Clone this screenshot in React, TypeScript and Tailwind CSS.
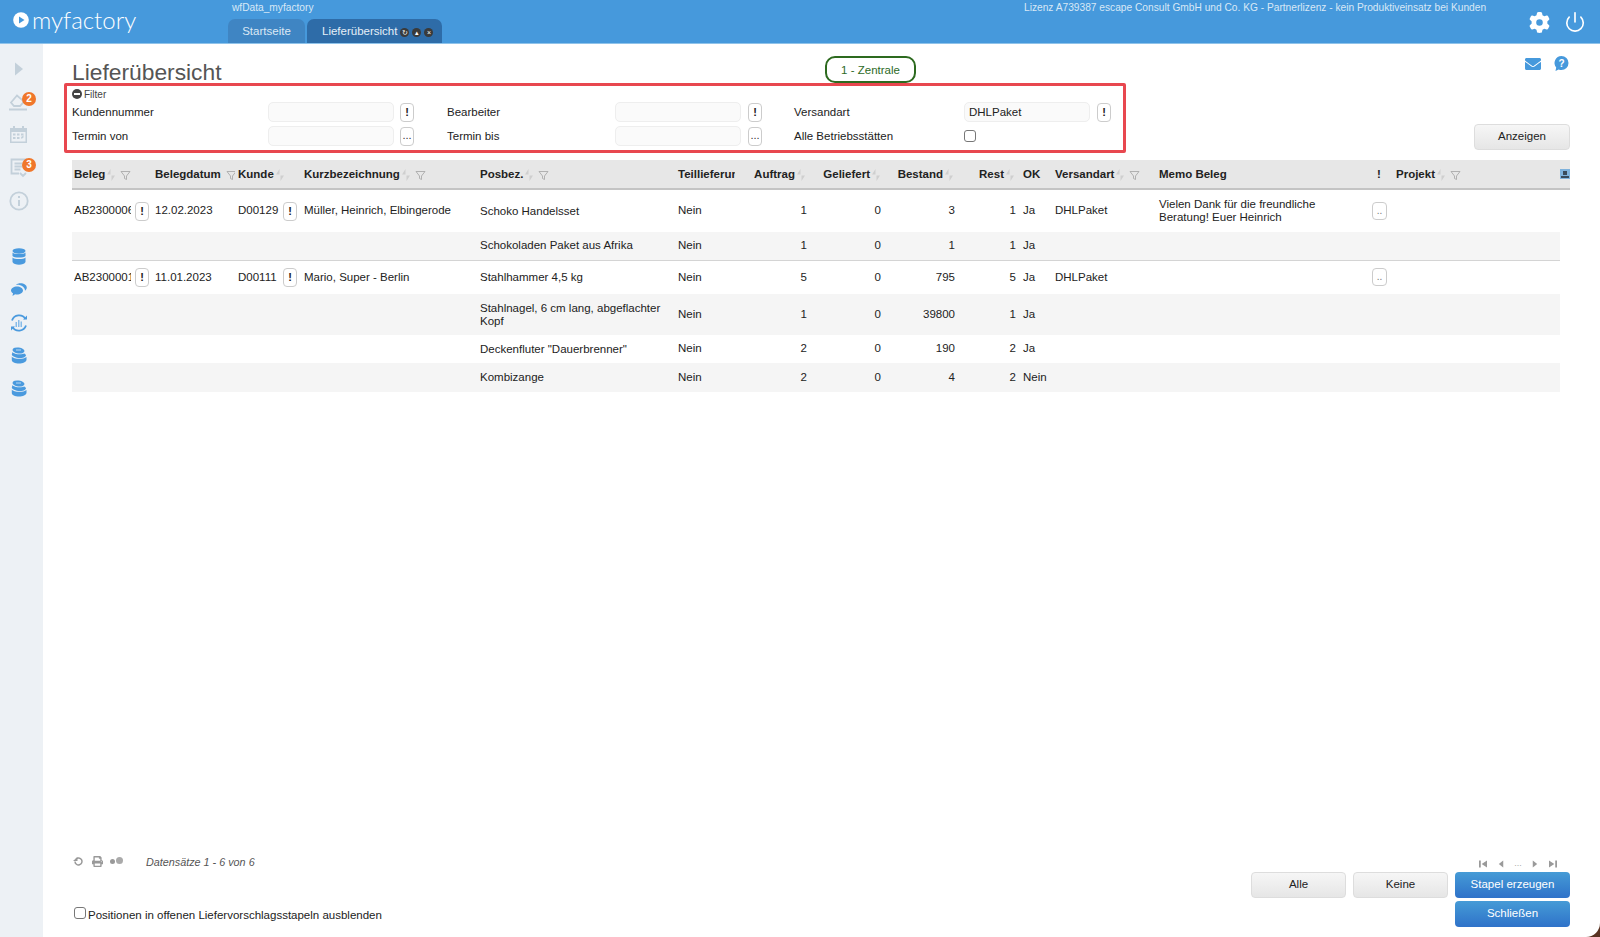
import { Power } from 'lucide-react';
import { FaEnvelope, FaPrint } from 'react-icons/fa';
import { FaGear } from 'react-icons/fa6';

type Row = {
  beleg?: string; datum?: string; kunde?: string; kurz?: string; pos: string;
  auftrag: number; bestand: number; ok: string; versand?: string; memo?: string;
  h: string; gray?: boolean; line?: boolean;
};

const rows: Row[] = [
  { beleg: 'AB2300006', datum: '12.02.2023', kunde: 'D00129', kurz: 'Müller, Heinrich, Elbingerode', pos: 'Schoko Handelsset', auftrag: 1, bestand: 3, ok: 'Ja', versand: 'DHLPaket', memo: 'Vielen Dank für die freundliche Beratung! Euer Heinrich', h: 'h-[43px]' },
  { pos: 'Schokoladen Paket aus Afrika', auftrag: 1, bestand: 1, ok: 'Ja', h: 'h-[28px]', gray: true, line: true },
  { beleg: 'AB2300001', datum: '11.01.2023', kunde: 'D00111', kurz: 'Mario, Super - Berlin', pos: 'Stahlhammer 4,5 kg', auftrag: 5, bestand: 795, ok: 'Ja', versand: 'DHLPaket', h: 'h-[34px]' },
  { pos: 'Stahlnagel, 6 cm lang, abgeflachter Kopf', auftrag: 1, bestand: 39800, ok: 'Ja', h: 'h-[41px]', gray: true },
  { pos: 'Deckenfluter "Dauerbrenner"', auftrag: 2, bestand: 190, ok: 'Ja', h: 'h-[28px]' },
  { pos: 'Kombizange', auftrag: 2, bestand: 4, ok: 'Nein', h: 'h-[29px]', gray: true },
];

function Sort() {
  return (
    <svg width="8" height="12" viewBox="0 0 8 12" className="shrink-0 ml-[2px]">
      <path d="M3.500 0 0 5.500h3.500zM4.500 12 8 6.500H4.500z" fill="#cfcfcf" />
    </svg>
  );
}

function Funnel() {
  return (
    <svg width="11" height="11" viewBox="0 0 11 11" className="shrink-0 ml-[5px]">
      <path d="M1 1.500h9L6.500 6v3.500L4.500 8.500V6z" fill="none" stroke="#aaa" strokeWidth="0.9" />
    </svg>
  );
}

function SmallBtn({ label = '!' }: { label?: string }) {
  return (
    <button type="button" className="w-[14px] h-[19px] shrink-0 flex items-center justify-center rounded-[4px] border border-[#ccc] bg-white text-[11px] font-bold leading-none text-[#222]">
      {label}
    </button>
  );
}

function DotsBtn() {
  return (
    <button type="button" className="w-[14px] h-[19px] shrink-0 flex items-end justify-center pb-[4px] rounded-[4px] border border-[#ccc] bg-white text-[11px] leading-none text-[#333]">
      ...
    </button>
  );
}

function Head({ label, sort, filter, right, className = '' }: { label: string; sort?: boolean; filter?: boolean; right?: boolean; className?: string }) {
  return (
    <th className={`p-0 pt-[2px] font-bold text-[11.500px] text-[#222] ${className}`}>
      <div className={`flex items-center overflow-hidden whitespace-nowrap ${right ? 'justify-end pr-[5px]' : 'pl-[2px]'}`}>
        {label}
        {sort && <Sort />}
        {filter && <Funnel />}
      </div>
    </th>
  );
}

function TableRow({ row }: { row: Row }) {
  const bg = row.gray ? 'bg-[#f5f5f5]' : 'bg-white';
  const line = row.line ? 'border-b border-[#d4d4d4]' : '';
  const td = `p-0 align-middle ${bg} ${line}`;
  return (
    <tr className={row.h}>
      <td className={td}>
        {row.beleg && (
          <div className="flex items-center pl-[2px]">
            <span className="w-[57px] mr-[4px] overflow-hidden whitespace-nowrap">{row.beleg}</span>
            <SmallBtn />
          </div>
        )}
      </td>
      <td className={`${td} pl-[3px]`}>{row.datum}</td>
      <td className={td}>
        {row.kunde && (
          <div className="flex items-center pl-[3px]">
            <span className="w-[45px]">{row.kunde}</span>
            <SmallBtn />
          </div>
        )}
      </td>
      <td className={`${td} pl-[3px]`}>{row.kurz}</td>
      <td className={`${td} pl-[3px] pr-[8px] leading-[13px]`}>{row.pos}</td>
      <td className={`${td} pl-[3px]`}>Nein</td>
      <td className={`${td} text-right pr-[3px]`}>{row.auftrag}</td>
      <td className={`${td} text-right pr-[4px]`}>0</td>
      <td className={`${td} text-right pr-[3px]`}>{row.bestand}</td>
      <td className={`${td} text-right pr-[3px]`}>{row.auftrag}</td>
      <td className={`${td} pl-[4px]`}>{row.ok}</td>
      <td className={`${td} pl-[3px]`}>{row.versand}</td>
      <td className={`${td} pl-[3px] pr-[16px] leading-[13px]`}>{row.memo}</td>
      <td className={td}>
        {row.versand && (
          <button type="button" className="ml-[5px] w-[15px] h-[18px] flex items-end justify-center pb-[3px] rounded-[4px] border border-[#ccc] bg-white text-[10px] leading-none text-[#777]">
            ..
          </button>
        )}
      </td>
      <td className={td} />
      <td className="p-0" />
    </tr>
  );
}

function Badge({ n }: { n: number }) {
  return (
    <span className="absolute top-[7px] left-[22px] w-[14px] h-[14px] rounded-full bg-[#f0772b] text-white text-[10px] font-bold leading-[14px] text-center">
      {n}
    </span>
  );
}

function Slot({ children, badge }: { children: React.ReactNode; badge?: number }) {
  return (
    <div className="relative w-[37px] h-[33px] flex items-center justify-center">
      {children}
      {badge && <Badge n={badge} />}
    </div>
  );
}

const grayStroke = { fill: 'none', stroke: '#c3d0da', strokeWidth: 1.8 };

function Coins() {
  return (
    <svg width="16" height="17" viewBox="0 0 16 17" fill="#4a9ade">
      <ellipse cx="7.500" cy="3.500" rx="6" ry="3" transform="rotate(8 7.500 3.500)" />
      <path d="M5 3h5" stroke="#d6e8f7" strokeWidth="0.8" />
      <path d="M1.500 5c1 2.300 9 3 12 1.500L15 8c0 1.500-1.500 3-6 3S.8 9 .8 7.500z" />
      <path d="M.8 9.500C2 12 12 13 15.500 10v3c-.5 2-3.500 3.500-7.500 3.500S.8 15 .8 13z" />
    </svg>
  );
}

function Sidebar() {
  return (
    <aside className="w-[43px] shrink-0 bg-[#edf1f5] pt-[8px] flex flex-col">
      <Slot>
        <svg width="10" height="14" viewBox="0 0 10 14"><path d="M1 0.500 9 7l-8 6.500z" fill="#c3d0da" /></svg>
      </Slot>
      <Slot badge={2}>
        <svg width="19" height="18" viewBox="0 0 19 18" {...grayStroke}><path d="M0 16.500h18M2 9.500l6-7 7 6-4 4.500H5z" /></svg>
      </Slot>
      <Slot>
        <svg width="19" height="19" viewBox="0 0 19 19" fill="#c3d0da">
          <path d="M1 3h3V1h2v2h7V1h2v2h3v15H1zM2.500 7v9.500h14V7z" />
          <path d="M4 8.500h2.500v2H4zM8 8.500h2.500v2H8zM12 8.500h2.500v2H12zM4 12h2.500v2H4zM8 12h2.500v2H8zM12 12l2.500-1.500v2L12.500 14z" />
        </svg>
      </Slot>
      <Slot badge={3}>
        <svg width="18" height="20" viewBox="0 0 18 20" {...grayStroke}><path d="M16 13V1.500H1.500v14H9M4.500 5.500h8M4.500 8.500h8M4.500 11.500h6M10 15l3 3 3-3" /></svg>
      </Slot>
      <Slot>
        <svg width="20" height="20" viewBox="0 0 20 20">
          <circle cx="10" cy="10" r="8.700" {...grayStroke} />
          <path d="M9 9h2v6H9zM9 5h2v2H9z" fill="#c3d0da" />
        </svg>
      </Slot>
      <div className="h-[23px]" />
      <Slot>
        <svg width="14" height="17" viewBox="0 0 14 17" fill="#4a9ade">
          <ellipse cx="7" cy="3" rx="6.500" ry="2.700" />
          <path d="M.5 4.500C2 6.500 12 6.500 13.500 4.500V8C12 10 2 10 .5 8zM.5 9.500C2 11.500 12 11.500 13.500 9.500V14C12 17.500 2 17.500 .5 14z" />
        </svg>
      </Slot>
      <Slot>
        <svg width="16" height="14" viewBox="0 0 16 14" fill="#4a9ade">
          <path d="M6 3.500c3.300 0 6 1.700 6 4s-2.700 4-6 4c-.7 0-1.300-.1-1.900-.2L1.500 13l.5-2.700C.8 9.500 0 8.600 0 7.500c0-2.300 2.700-4 6-4z" />
          <path d="M5 1.800C6 .8 7.800.3 9.500.3c3.500 0 6.300 1.900 6.300 4.300 0 1.300-.7 2.300-1.800 3.200.1-3.600-3.800-6.400-9-6z" />
        </svg>
      </Slot>
      <Slot>
        <svg width="18" height="18" viewBox="0 0 18 18">
          <path d="M2 6.500A7.500 7.500 0 0 1 15.500 5M16 11.500A7.500 7.500 0 0 1 2.500 13" fill="none" stroke="#4a9ade" strokeWidth="1.800" />
          <path d="M13 5.500h4V1.500zM5 12.500H1v4z" fill="#4a9ade" />
          <path d="M5.500 8h1.500v5H5.500zM8 6h1.500v7H8zM10.500 7.500H12V13h-1.500z" fill="#86bbe8" />
        </svg>
      </Slot>
      <Slot>
        <Coins />
      </Slot>
      <Slot>
        <Coins />
      </Slot>
    </aside>
  );
}

function PagerIcon({ d }: { d: string }) {
  return (
    <svg width="8" height="8" viewBox="0 0 9 8"><path d={d} fill="#9a9a9a" /></svg>
  );
}

const grayBtn = 'h-[26px] rounded-[4px] border border-[#ddd] bg-linear-to-b from-[#f6f6f6] to-[#e6e6e6] text-[11.500px] text-[#222]';
const blueBtn = 'w-[115px] h-[26px] rounded-[4px] bg-linear-to-b from-[#469bd6] to-[#2f72c9] text-[11.500px] text-white';
const inputCls = 'h-[20px] w-[126px] rounded-[5px] border border-[#eee] bg-[#fafafa] px-[4px] text-[11.500px] text-[#222] outline-none';
const checkCls = 'appearance-none m-0 w-[12px] h-[12px] rounded-[3px] border border-[#777] bg-white';
const labelCls = 'pt-[2px]';

function FilterBox() {
  return (
    <section className="w-[1062px] h-[70px] -ml-[8px] border-[3px] border-[#e8474f] rounded-[2px] pl-[5px] text-[11.500px] text-[#222]">
      <div className="h-[16px] flex items-center text-[10px] text-[#444]">
        <span className="relative w-[10px] h-[10px] rounded-full bg-[#444] mr-[2px] flex items-center justify-center">
          <span className="w-[6px] h-[2px] bg-white" />
        </span>
        Filter
      </div>
      <div className="grid grid-cols-[196px_132px_47px_168px_133px_46px_170px_133px_20px] grid-rows-[20px_20px] gap-y-[4px] items-center">
        <span className={labelCls}>Kundennummer</span>
        <input className={inputCls} />
        <SmallBtn />
        <span className={labelCls}>Bearbeiter</span>
        <input className={inputCls} />
        <SmallBtn />
        <span className={labelCls}>Versandart</span>
        <input className={inputCls} defaultValue="DHLPaket" />
        <SmallBtn />
        <span className={labelCls}>Termin von</span>
        <input className={inputCls} />
        <DotsBtn />
        <span className={labelCls}>Termin bis</span>
        <input className={inputCls} />
        <DotsBtn />
        <span className={labelCls}>Alle Betriebsstätten</span>
        <input type="checkbox" className={checkCls} />
        <span />
      </div>
    </section>
  );
}

export default function App() {
  return (
    <div className="w-[1600px] h-[937px] overflow-hidden bg-[#5a3322] font-['Liberation_Sans',Arial,sans-serif]">
      <div className="w-full h-full flex flex-col bg-white rounded-br-[14px] overflow-hidden">
        <header className="h-[44px] shrink-0 bg-[#4699dc] flex border-b border-[#8fc3ea]">
          <div className="w-[232px] shrink-0 flex items-center pl-[13px] pb-[3px]">
            <svg width="16" height="16" viewBox="0 0 16 16">
              <circle cx="8" cy="8" r="7.800" fill="white" />
              <path d="M6 4.500 11.500 8 6 11.500z" fill="#4699dc" />
            </svg>
            <span className="ml-[3px] font-['Lato',sans-serif] font-light text-[24px] leading-none text-white">myfactory</span>
          </div>
          <div className="w-[772px] shrink-0 flex flex-col">
            <span className="h-[19px] pt-[1px] text-[10.200px] leading-[14px] text-[#d8e8f6]">wfData_myfactory</span>
            <div className="flex gap-[2px] -ml-[4px] flex-1">
              <div className="w-[77px] pt-[2px] rounded-t-[7px] bg-[#3f85c3] text-[11.500px] text-[#dbe8f4] flex items-center justify-center">Startseite</div>
              <div className="w-[135px] pt-[2px] rounded-t-[7px] bg-[#2e6ca8] text-[11.500px] text-[#e6eff7] flex items-center pl-[15px]">
                Lieferübersicht
                <span className="ml-[3px] flex gap-[3px]">
                  <span className="w-[9px] h-[9px] rounded-full bg-[#3a3a3a] text-[7px] leading-[9px] text-white text-center">↻</span>
                  <span className="w-[9px] h-[9px] rounded-full bg-[#3a3a3a] text-[7px] leading-[9px] text-white text-center">▴</span>
                  <span className="w-[9px] h-[9px] rounded-full bg-[#3a3a3a] text-[7px] leading-[9px] text-white text-center">×</span>
                </span>
              </div>
            </div>
          </div>
          <span className="w-[490px] shrink-0 ml-[20px] pt-[1px] text-[10.200px] leading-[14px] text-[#d8e8f6] whitespace-nowrap">
            Lizenz A739387 escape Consult GmbH und Co. KG - Partnerlizenz - kein Produktiveinsatz bei Kunden
          </span>
          <div className="flex items-center gap-[14px] pl-[15px] pt-[1px]">
            <FaGear size={21} color="white" />
            <Power size={22} color="white" strokeWidth={1.800} />
          </div>
        </header>

        <div className="flex-1 flex min-h-0">
          <Sidebar />
          <main className="flex-1 flex flex-col pl-[29px] pr-[31px] pb-[10px]">
            <div className="h-[39px] flex items-start">
              <h1 className="w-[753px] shrink-0 pt-[15px] text-[22.800px] leading-[27px] font-normal text-[#555]">Lieferübersicht</h1>
              <div className="relative z-10 mt-[12px] w-[91px] h-[27px] rounded-[10px] border-[2.500px] border-[#2d6a1f] bg-white text-[11.500px] leading-[24px] text-center text-[#2d6a1f]">
                1 - Zentrale
              </div>
              <div className="ml-auto mt-[11px] flex items-center gap-[12px]">
                <FaEnvelope size={16} color="#4699dc" />
                <svg width="17" height="17" viewBox="0 0 17 17">
                  <path d="M8.500 1a7 7 0 0 1 0 14c-1 0-2-.2-2.800-.6L2.500 16l.7-3.500A7 7 0 0 1 8.500 1z" fill="#4699dc" />
                  <text x="8.500" y="11.500" textAnchor="middle" fontSize="10" fontWeight="700" fill="white">?</text>
                </svg>
              </div>
            </div>

            <div className="flex">
              <FilterBox />
              <button type="button" className={`${grayBtn} ml-auto mt-[41px] w-[96px]`}>Anzeigen</button>
            </div>

            <table className="mt-[7px] w-[1498px] table-fixed border-collapse text-[11.500px] text-[#222]">
              <colgroup>
                <col className="w-[80px]" />
                <col className="w-[83px]" />
                <col className="w-[66px]" />
                <col className="w-[176px]" />
                <col className="w-[198px]" />
                <col className="w-[60px]" />
                <col className="w-[75px]" />
                <col className="w-[75px]" />
                <col className="w-[73px]" />
                <col className="w-[61px]" />
                <col className="w-[33px]" />
                <col className="w-[104px]" />
                <col className="w-[211px]" />
                <col className="w-[26px]" />
                <col className="w-[167px]" />
                <col className="w-[10px]" />
              </colgroup>
              <thead>
                <tr className="h-[29px] bg-[#e7e7e7] border-b-2 border-[#c4c4c4]">
                  <Head label="Beleg" sort filter />
                  <Head label="Belegdatum" filter className="[&>div]:pl-[3px]" />
                  <Head label="Kunde" sort className="[&>div]:pl-[3px]" />
                  <Head label="Kurzbezeichnung" sort filter className="[&>div]:pl-[3px]" />
                  <Head label="Posbez." sort filter className="[&>div]:pl-[3px]" />
                  <Head label="Teillieferung" className="[&>div]:pl-[3px] [&>div]:pr-[3px]" />
                  <Head label="Auftrag" sort right />
                  <Head label="Geliefert" sort right />
                  <Head label="Bestand" sort right />
                  <Head label="Rest" sort right />
                  <Head label="OK" className="[&>div]:pl-[4px]" />
                  <Head label="Versandart" sort filter className="[&>div]:pl-[3px]" />
                  <Head label="Memo Beleg" className="[&>div]:pl-[3px]" />
                  <Head label="!" className="[&>div]:pl-[10px]" />
                  <Head label="Projekt" sort filter className="[&>div]:pl-[3px]" />
                  <th className="p-0">
                    <svg width="10" height="10" viewBox="0 0 10 10">
                      <rect width="10" height="10" fill="#7fb2dc" />
                      <path d="M3 2h4v4H3zM1 7h8v2H1z" fill="#3a4a5a" />
                    </svg>
                  </th>
                </tr>
              </thead>
              <tbody>
                {rows.map((row) => (
                  <TableRow key={row.pos} row={row} />
                ))}
              </tbody>
            </table>

            <footer className="mt-auto flex justify-between items-end">
              <div className="flex flex-col gap-[37px] pb-[3px]">
                <div className="flex items-center">
                  <svg width="11" height="11" viewBox="0 0 11 11" className="ml-[1px]">
                    <path d="M2 5.500a3.500 3.500 0 1 0 1-2.500" fill="none" stroke="#999" strokeWidth="1.500" />
                    <path d="M0 4h4.500V0z" fill="#999" transform="translate(0 1)" />
                  </svg>
                  <FaPrint size={11} color="#999" className="ml-[8px]" />
                  <span className="ml-[7px] w-[5px] h-[5px] rounded-full bg-[#999]" />
                  <span className="ml-[1px] -mt-[2px] w-[7px] h-[7px] rounded-full bg-[#aaa]" />
                  <span className="ml-[23px] text-[10.800px] italic text-[#555]">Datensätze 1 - 6 von 6</span>
                </div>
                <label className="flex items-center text-[11.500px] text-[#222]">
                  <input type="checkbox" className={`${checkCls} -mt-[4px] ml-[2px] mr-[2px]`} />
                  Positionen in offenen Liefervorschlagsstapeln ausblenden
                </label>
              </div>
              <div className="flex flex-col items-end">
                <div className="w-[78px] mr-[13px] h-[18px] flex items-center justify-between pt-[1px] text-[9px] text-[#aaa]">
                  <PagerIcon d="M0 0h2v8H0zM9 0v8L3 4z" />
                  <PagerIcon d="M7 0v8L2 4z" />
                  <span className="leading-none">...</span>
                  <PagerIcon d="M2 0v8l5-4z" />
                  <PagerIcon d="M0 0v8l6-4zM7 0h2v8H7z" />
                </div>
                <div className="flex gap-[7px]">
                  <button type="button" className={`${grayBtn} w-[95px]`}>Alle</button>
                  <button type="button" className={`${grayBtn} w-[95px]`}>Keine</button>
                  <button type="button" className={blueBtn}>Stapel erzeugen</button>
                </div>
                <button type="button" className={`${blueBtn} mt-[3px]`}>Schließen</button>
              </div>
            </footer>
          </main>
        </div>
      </div>
    </div>
  );
}
